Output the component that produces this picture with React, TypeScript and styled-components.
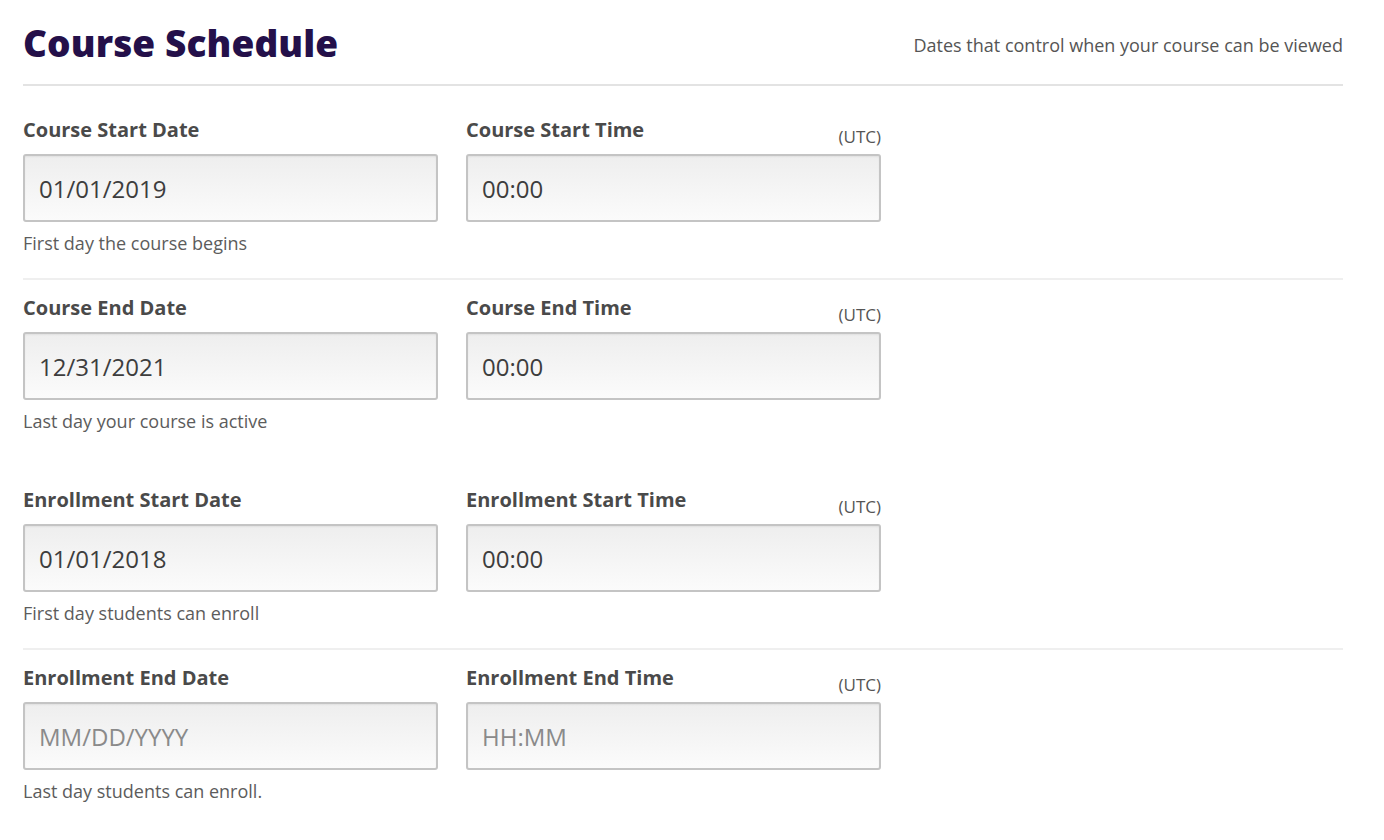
import React from "react";
import styled, { createGlobalStyle } from "styled-components";

const Global = createGlobalStyle`
  html, body { margin: 0; padding: 0; background: #ffffff; }
  body { font-family: "Open Sans", "Liberation Sans", sans-serif; color: #444; }
  * { box-sizing: border-box; }
`;

const Page = styled.div`
  width: 1384px;
  padding: 0 41px 0 23px;
`;

const Header = styled.header`
  display: flex;
  justify-content: space-between;
  align-items: center;
  padding: 20px 0 18px;
  border-bottom: 2px solid #e3e3e3;
`;

const Title = styled.h1`
  margin: 0;
  font-family: "Open Sans", "Liberation Sans", sans-serif;
  font-weight: 800;
  font-size: 37px;
  line-height: 46px;
  letter-spacing: 0.1px;
  color: #24104a;
`;

const Subtitle = styled.p`
  margin: 4px 0 0;
  font-size: 18px;
  line-height: 22px;
  color: #555;
`;

const Group = styled.section`
  padding-top: 32px;
`;

const Row = styled.div`
  display: grid;
  grid-template-columns: 415px 415px;
  column-gap: 28px;
  padding-bottom: 24px;
  & + & {
    border-top: 2px solid #efefef;
    padding-top: 16px;
  }
`;

const Field = styled.div`
  display: flex;
  flex-direction: column;
`;

const LabelRow = styled.div`
  display: flex;
  justify-content: space-between;
  align-items: flex-end;
  margin-bottom: 7px;
`;

const Label = styled.label`
  font-size: 20px;
  font-weight: 700;
  line-height: 24px;
  padding-bottom: 5px;
  color: #4a4a4a;
`;

const Zone = styled.span`
  font-size: 17px;
  line-height: 20px;
  color: #555;
`;

const Input = styled.input`
  width: 100%;
  height: 68px;
  padding: 0 14px;
  border: 2px solid #c4c4c4;
  border-radius: 3px;
  background: linear-gradient(#eeeeee, #fbfbfb);
  box-shadow: inset 0 1px 2px rgba(0, 0, 0, 0.06);
  font-family: "Open Sans", "Liberation Sans", sans-serif;
  font-size: 24px;
  color: #3d3d3d;
  outline: none;
  &::placeholder {
    color: #8a8a8a;
    opacity: 1;
  }
`;

const Help = styled.p`
  margin: 10px 0 0;
  font-size: 18px;
  line-height: 22px;
  color: #5c5c5c;
`;

type RowData = {
  dateLabel: string;
  timeLabel: string;
  date: string;
  time: string;
  help: string;
};

const groups: RowData[][] = [
  [
    { dateLabel: "Course Start Date", timeLabel: "Course Start Time", date: "01/01/2019", time: "00:00", help: "First day the course begins" },
    { dateLabel: "Course End Date", timeLabel: "Course End Time", date: "12/31/2021", time: "00:00", help: "Last day your course is active" },
  ],
  [
    { dateLabel: "Enrollment Start Date", timeLabel: "Enrollment Start Time", date: "01/01/2018", time: "00:00", help: "First day students can enroll" },
    { dateLabel: "Enrollment End Date", timeLabel: "Enrollment End Time", date: "", time: "", help: "Last day students can enroll." },
  ],
];

export default function App() {
  return (
    <>
      <Global />
      <Page>
        <Header>
          <Title>Course Schedule</Title>
          <Subtitle>Dates that control when your course can be viewed</Subtitle>
        </Header>
        {groups.map((g, gi) => (
          <Group key={gi}>
            {g.map((r) => (
              <Row key={r.dateLabel}>
                <Field>
                  <LabelRow>
                    <Label>{r.dateLabel}</Label>
                  </LabelRow>
                  <Input readOnly value={r.date} placeholder="MM/DD/YYYY" />
                  <Help>{r.help}</Help>
                </Field>
                <Field>
                  <LabelRow>
                    <Label>{r.timeLabel}</Label>
                    <Zone>(UTC)</Zone>
                  </LabelRow>
                  <Input readOnly value={r.time} placeholder="HH:MM" />
                </Field>
              </Row>
            ))}
          </Group>
        ))}
      </Page>
    </>
  );
}
